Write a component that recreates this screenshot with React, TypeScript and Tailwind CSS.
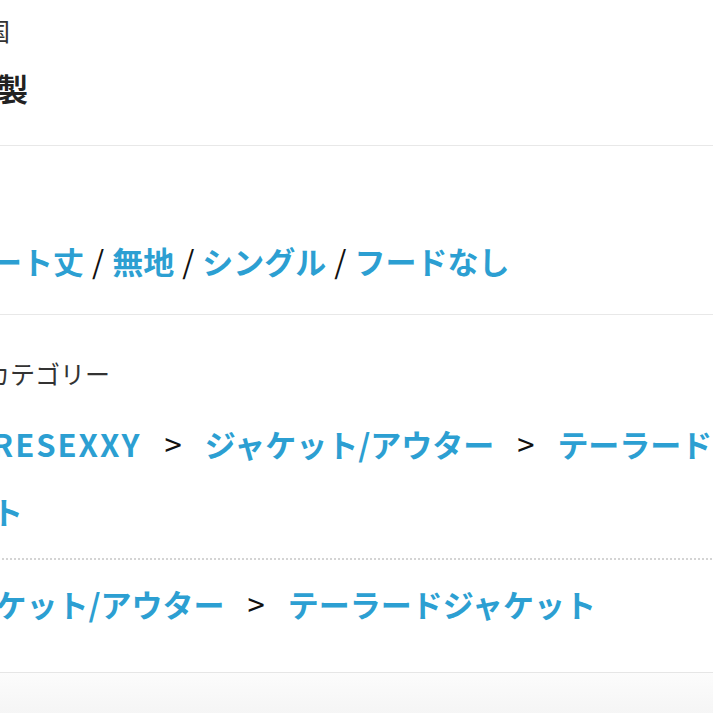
const tags = ["ショート丈", "無地", "シングル", "フードなし"];

const crumbs = [
  ["RESEXXY", "ジャケット/アウター", "テーラードジャケット"],
  ["ジャケット/アウター", "テーラードジャケット"],
];

function Crumbs({ items }: { items: string[] }) {
  return (
    <>
      {items.map((item, i) => (
        <span key={i}>
          {i > 0 && <span className="mx-[23px] font-normal text-[#111]">&gt;</span>}
          <a className={`font-bold text-[#2c9fd2] ${/^[A-Z]+$/.test(item) ? "tracking-[2px]" : ""}`}>{item}</a>
        </span>
      ))}
    </>
  );
}

export default function App() {
  return (
    <div className="w-[713px] h-[713px] overflow-hidden bg-white font-['Noto_Sans_CJK_JP','Noto_Sans',sans-serif]">
      <div className="-ml-[65px] w-[960px]">
        <section className="pt-[13px] pb-[37px] border-b border-[#e8e8e8]">
          <p className="text-[25px] leading-[34px] text-[#333]">原産国</p>
          <p className="mt-[21px] text-[31px] leading-[40px] font-bold text-[#222]">中国製</p>
        </section>

        <section className="pt-[40px] pb-[33px] border-b border-[#e8e8e8]">
          <p className="text-[25px] leading-[34px] text-[#333]">特徴</p>
          <p className="mt-[21px] -ml-[6px] text-[31px] leading-[40px]">
            {tags.map((t, i) => (
              <span key={i}>
                {i > 0 && <span className="mx-[8px] text-[#111]">/</span>}
                <a className="font-bold text-[#2c9fd2]">{t}</a>
              </span>
            ))}
          </p>
        </section>

        <section className="pt-[41px] pb-[48px] border-b border-[#e6e6e6]">
          <p className="text-[25px] leading-[34px] text-[#333]">商品カテゴリー</p>
          <div className="mt-[20px] ml-[57px] w-[850px] pb-[14px] text-[31px] leading-[67px]">
            <Crumbs items={crumbs[0]} />
          </div>
          <div className="border-t-2 border-dotted border-[#d4d4d4] pt-[24px] text-[31px] leading-[40px]">
            <Crumbs items={crumbs[1]} />
          </div>
        </section>

        <div className="h-[60px] bg-linear-to-b from-[#fcfcfc] to-[#f2f2f2]" />
      </div>
    </div>
  );
}
